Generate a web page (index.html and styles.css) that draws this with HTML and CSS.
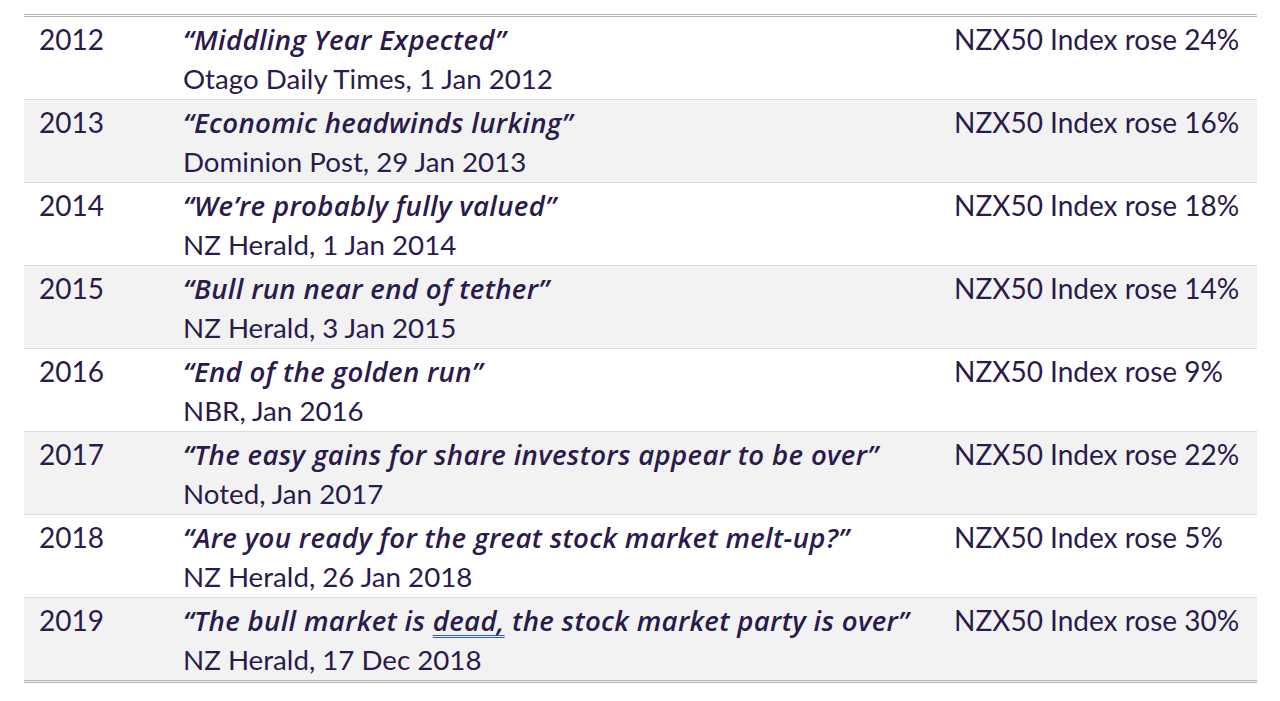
FILE: index.html
```html
<!DOCTYPE html>
<html>
<head>
<meta charset="utf-8">
<link rel="stylesheet" href="styles.css">
</head>
<body>
<div class="wrap">
<table class="headlines">
<colgroup><col class="c-year"><col class="c-quote"><col class="c-result"></colgroup>
<tbody>
<tr><td class="year">2012</td><td><div class="quote">“Middling Year Expected”</div><div class="src">Otago Daily Times, 1 Jan 2012</div></td><td class="result">NZX50 Index rose 24%</td></tr>
<tr class="alt"><td class="year">2013</td><td><div class="quote">“Economic headwinds lurking”</div><div class="src">Dominion Post, 29 Jan 2013</div></td><td class="result">NZX50 Index rose 16%</td></tr>
<tr><td class="year">2014</td><td><div class="quote">“We’re probably fully valued”</div><div class="src">NZ Herald, 1 Jan 2014</div></td><td class="result">NZX50 Index rose 18%</td></tr>
<tr class="alt"><td class="year">2015</td><td><div class="quote">“Bull run near end of tether”</div><div class="src">NZ Herald, 3 Jan 2015</div></td><td class="result">NZX50 Index rose 14%</td></tr>
<tr><td class="year">2016</td><td><div class="quote">“End of the golden run”</div><div class="src">NBR, Jan 2016</div></td><td class="result">NZX50 Index rose 9%</td></tr>
<tr class="alt"><td class="year">2017</td><td><div class="quote">“The easy gains for share investors appear to be over”</div><div class="src">Noted, Jan 2017</div></td><td class="result">NZX50 Index rose 22%</td></tr>
<tr><td class="year">2018</td><td><div class="quote">“Are you ready for the great stock market melt-up?”</div><div class="src">NZ Herald, 26 Jan 2018</div></td><td class="result">NZX50 Index rose 5%</td></tr>
<tr class="alt"><td class="year">2019</td><td><div class="quote">“The bull market is <span class="mark">dead,</span> the stock market party is over”</div><div class="src">NZ Herald, 17 Dec 2018</div></td><td class="result">NZX50 Index rose 30%</td></tr>
</tbody>
</table>
</div>
</body>
</html>
```

FILE: styles.css
```css
html, body {
  margin: 0;
  padding: 0;
  background: #ffffff;
}
.wrap {
  padding: 14px 23px 0 24px;
}
.headlines {
  width: 100%;
  border-collapse: collapse;
  border-top: 3px double #b5b5b5;
  border-bottom: 3px double #b5b5b5;
  font-family: Lato, "Open Sans", sans-serif;
  font-size: 28px;
  color: #2b1a4c;
}
.c-year { width: 144px; }
.c-result { width: 318px; }
.headlines td {
  vertical-align: top;
  padding: 2px 16px 0 15px;
  line-height: 40px;
  border-top: 1px solid #dcdcdc;
  white-space: nowrap;
}
.headlines tr:first-child td { border-top: none; }
.headlines tr.alt td { background: #f2f2f2; }
.quote {
  font-family: "Open Sans", Lato, sans-serif;
  font-size: 27.6px;
  font-weight: 600;
  font-style: italic;
  letter-spacing: 0.32px;
}
.src {
  font-weight: 400;
  font-size: 27.7px;
}
.mark {
  text-decoration-line: underline;
  text-decoration-style: double;
  text-decoration-color: #2c5cd6;
  text-decoration-thickness: 1px;
  text-underline-offset: 4px;
}
```
